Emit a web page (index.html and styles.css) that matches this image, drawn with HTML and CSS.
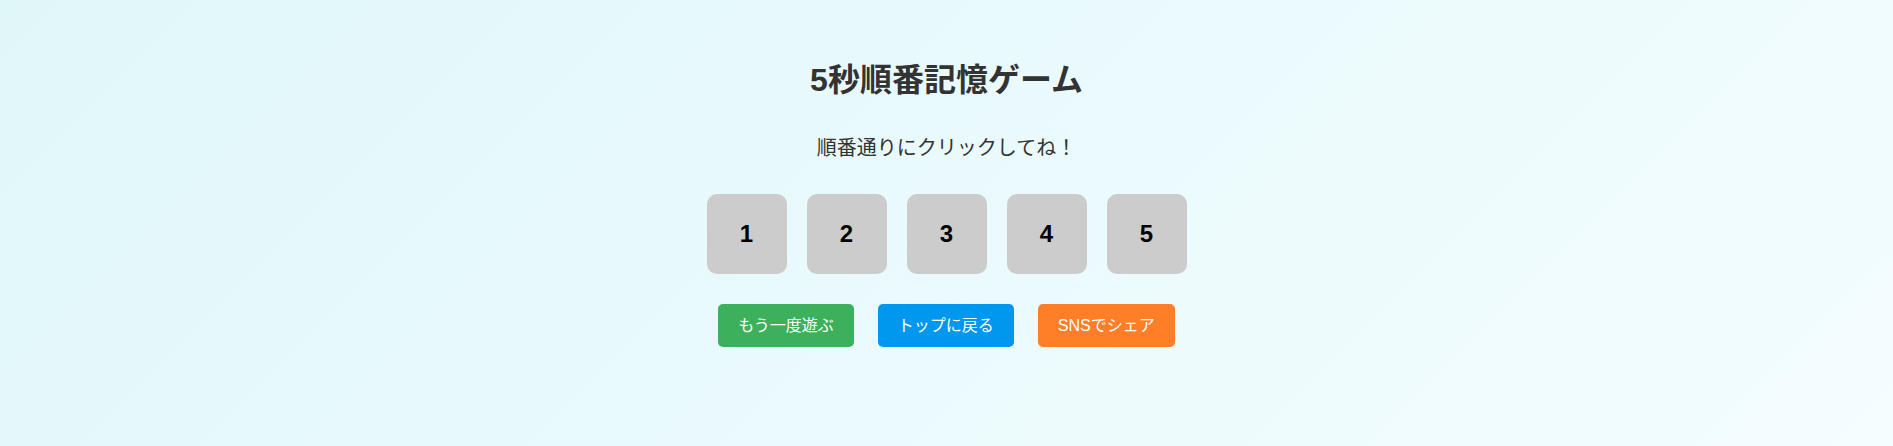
FILE: index.html
```html
<!DOCTYPE html>
<html lang="ja">
<head>
<meta charset="utf-8">
<title>5秒順番記憶ゲーム</title>
<link rel="stylesheet" href="styles.css">
</head>
<body>
<main class="game">
  <h1 class="title">5秒順番記憶ゲーム</h1>
  <p class="message">順番通りにクリックしてね！</p>
  <div class="tiles">
    <div class="tile">1</div>
    <div class="tile">2</div>
    <div class="tile">3</div>
    <div class="tile">4</div>
    <div class="tile">5</div>
  </div>
  <div class="actions">
    <button class="btn btn-retry">もう一度遊ぶ</button>
    <button class="btn btn-top">トップに戻る</button>
    <button class="btn btn-share">SNSでシェア</button>
  </div>
</main>
</body>
</html>
```

FILE: styles.css
```css
html, body {
  margin: 0;
  height: 100%;
}
body {
  background: linear-gradient(135deg, #e0f7fa 0%, #f4fdff 100%);
  font-family: "Liberation Sans", "Noto Sans CJK JP", sans-serif;
  color: #333;
}
.game {
  display: flex;
  flex-direction: column;
  align-items: center;
  padding-top: 60px;
}
.title {
  margin: 0;
  font-size: 32px;
  line-height: 40px;
  font-weight: bold;
  color: #333;
}
.message {
  margin: 34px 0 0;
  font-size: 20px;
  line-height: 28px;
  color: #333;
}
.tiles {
  display: flex;
  gap: 20px;
  margin-top: 32px;
}
.tile {
  width: 80px;
  height: 80px;
  border-radius: 10px;
  background: #cccccc;
  display: flex;
  align-items: center;
  justify-content: center;
  font-size: 24px;
  font-weight: bold;
  color: #000;
}
.actions {
  display: flex;
  gap: 24px;
  margin-top: 30px;
}
.btn {
  border: none;
  border-radius: 5px;
  padding: 10px 20px;
  font-family: "Liberation Sans", "Noto Sans CJK JP", sans-serif;
  font-size: 16px;
  line-height: 23px;
  color: #fff;
  cursor: pointer;
}
.btn-retry { background: #3cb05a; }
.btn-top { background: #0098ef; }
.btn-share { background: #ff7e27; }
```
